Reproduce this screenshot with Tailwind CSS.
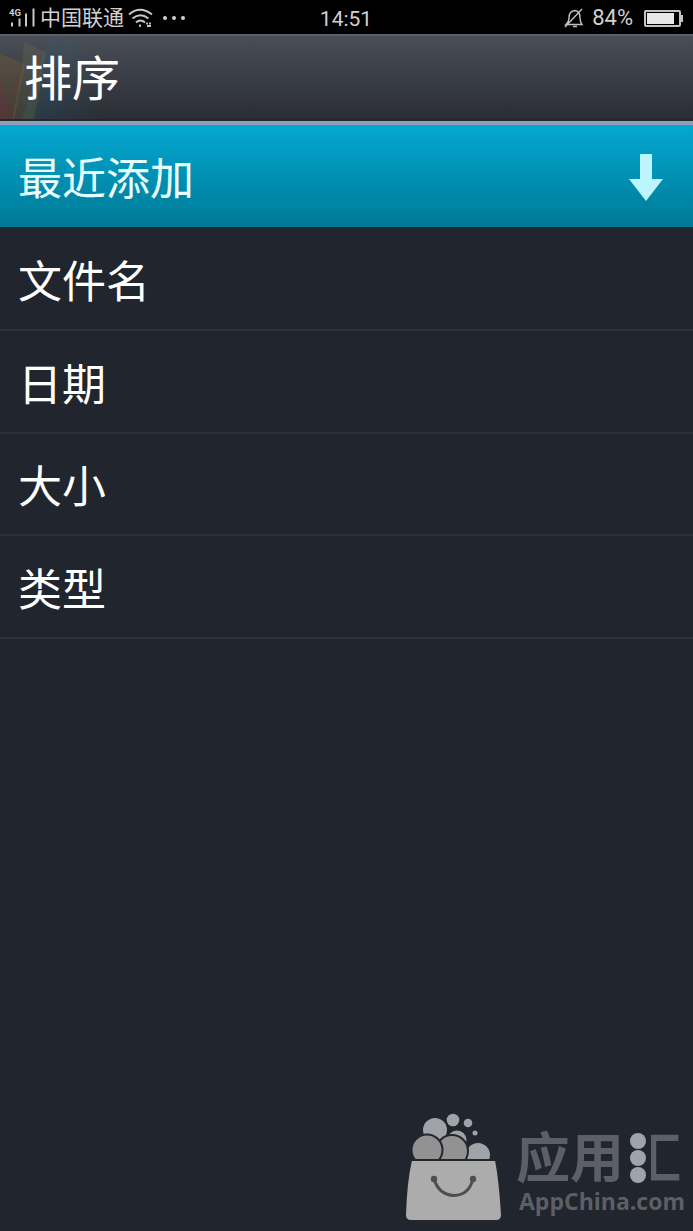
<!DOCTYPE html>
<html lang="zh-CN">
<head>
  <meta charset="UTF-8" />
  <meta name="viewport" content="width=device-width, initial-scale=1.0"/>
  <title>排序</title>
  <script src="https://cdn.jsdelivr.net/npm/@tailwindcss/browser@4"></script>
</head>
<body class="bg-[#21252d] font-['Roboto','Noto_Sans_CJK_SC',sans-serif] text-white">
<div class="relative h-[1231px] w-full overflow-hidden">

  <!-- Status bar -->
  <header class="grid h-[34px] grid-cols-3 items-center bg-black pt-[2px] pl-[9px] pr-[10px] text-[#d0d0d0]">
    <div class="flex items-center">
      <svg class="mr-[4px] h-[20px] w-[27px]" viewBox="0 0 27 20">
        <text x="0" y="8" font-size="9.500" font-weight="700" fill="#d0d0d0">4G</text>
        <path d="M3 14.500v4M10.500 10.500v8M17 5.500v13M24.500 .5v18" stroke="#c8c8c8" stroke-width="2"/>
      </svg>
      <span class="text-[21px] leading-none whitespace-nowrap">中国联通</span>
      <svg class="ml-[4px] h-[20px] w-[25px] shrink-0" viewBox="0 0 25 20" fill="none" stroke="#c8c8c8" stroke-width="2">
        <path d="M1 6.500Q12 -3 24 6.500M4.500 10.500Q12 4 20.500 10.500M8 14.500Q12.500 10.500 17 14.500"/>
        <path d="M12 16.500v2.500M19 14.500v2M22 14.500v2M19 18h4" stroke-width="1.800"/>
      </svg>
      <span class="ml-[10px] flex gap-[5px]">
        <i class="size-[4px] rounded-full bg-[#d0d0d0]"></i>
        <i class="size-[4px] rounded-full bg-[#d0d0d0]"></i>
        <i class="size-[4px] rounded-full bg-[#d0d0d0]"></i>
      </span>
    </div>
    <time class="pt-[2px] text-center text-[21px] leading-none">14:51</time>
    <div class="flex items-center justify-end">
      <svg class="mr-[8px] h-[20px] w-[20px]" viewBox="0 0 20 20" fill="none" stroke="#c0c0c0" stroke-width="1.400">
        <path d="M2 16.500Q5 14 5 10Q5 3 11 2.500Q16 3 16 10Q16 14 18 16.500ZM9 18.500h4M1 19L18 1"/>
      </svg>
      <span class="mr-[11px] text-[22px] leading-none">84%</span>
      <div class="h-[17px] w-[37px] rounded-[2px] border-2 border-[#c4c4c4] p-[1px]">
        <div class="h-full w-[27px] bg-[#e8e8e8]"></div>
      </div>
      <div class="h-[7px] w-[2px] bg-[#c4c4c4]"></div>
    </div>
  </header>

  <!-- Title bar -->
  <div class="relative flex h-[87px] items-center overflow-hidden border-t-2 border-[#5a5e67] border-b-2 border-b-[#24272d] bg-linear-to-b from-[#4a4e57] to-[#2a2d34] pt-[4px] pl-[24px]">
    <svg class="absolute top-0 left-0 h-[84px] w-[110px]" viewBox="0 0 110 84">
      <defs>
        <linearGradient id="fade" x1="0" x2="1" y1="0" y2="0">
          <stop offset="0" stop-color="#246a82" stop-opacity=".25"/>
          <stop offset="1" stop-color="#246a82" stop-opacity="0"/>
        </linearGradient>
      </defs>
      <path d="M48 4Q60 -3 76 4L106 60V84H22Z" fill="url(#fade)"/>
      <path d="M24 5L46 17L34 84H12L22 34Z" fill="#7a7548" fill-opacity=".25"/>
      <path d="M0 18L25 28L14 84H0Z" fill="#99672d" fill-opacity=".25"/>
      <path d="M0 44L14 84H0Z" fill="#7c2848" fill-opacity=".25"/>
    </svg>
    <h1 class="relative text-[48px] leading-none">排序</h1>
  </div>

  <!-- Sort options -->
  <main class="text-[44px] leading-none">
    <div class="h-[4px] bg-[#8ea0bb]"></div>
    <div class="flex h-[102px] items-center justify-between bg-linear-to-b from-[#04a8d2] to-[#007995] pr-[30px] pl-[18px] text-[#e8ffff]">
      <span class="pt-[8px]">最近添加</span>
      <svg class="mt-[2px] h-[47px] w-[34px]" viewBox="0 0 34 47">
        <path d="M11 0H23V25H34L17 47L0 25H11Z" fill="#bdf5ff"/>
      </svg>
    </div>
    <div class="flex h-[104px] items-center border-b-2 border-[#2d323a] pt-[9px] pl-[18px]">文件名</div>
    <div class="flex h-[102.500px] items-center border-b-2 border-[#2d323a] pt-[9px] pl-[18px]">日期</div>
    <div class="flex h-[102.500px] items-center border-b-2 border-[#2d323a] pt-[9px] pl-[18px]">大小</div>
    <div class="flex h-[102.500px] items-center border-b-2 border-[#2d323a] pt-[9px] pl-[18px]">类型</div>
  </main>

  <!-- Watermark -->
  <div class="absolute right-0 bottom-0 flex h-[120px] w-[290px]">
    <svg class="h-[120px] w-[102px] shrink-0" viewBox="0 0 102 120">
      <g fill="#a0a3a8">
        <circle cx="50" cy="9" r="6.300"/>
        <circle cx="65" cy="12" r="4.300"/>
        <circle cx="72" cy="22" r="2.500"/>
        <circle cx="54" cy="29" r="10.500" stroke="#22262d" stroke-width="2"/>
        <circle cx="32" cy="19" r="12"/>
        <circle cx="75" cy="44" r="13" stroke="#22262d" stroke-width="2"/>
        <circle cx="49" cy="40" r="16" fill="#929292" stroke="#22262d" stroke-width="2"/>
        <circle cx="24" cy="39" r="15.500" fill="#929292" stroke="#22262d" stroke-width="2"/>
      </g>
      <path d="M8 49H93Q97 70 99 104Q99 110 93 110H8Q2 110 2 104Q3 71 8 49Z" fill="#acacac" stroke="#22262d" stroke-width="2"/>
      <path d="M31 68Q36 84 51 84.500Q66 84 70 68" fill="none" stroke="#4d4e50" stroke-width="3"/>
      <circle cx="31" cy="68" r="3.200" fill="#4d4e50"/>
      <circle cx="70" cy="68" r="3.200" fill="#4d4e50"/>
    </svg>
    <div class="relative ml-[11px] pt-[20px]">
      <div class="flex text-[54px] leading-[57px] font-bold text-[#5c5f66]">
        <span>应用</span><span class="ml-[3px] origin-right scale-x-85 bg-linear-to-r from-transparent from-35% to-[#5c5f66] to-35% bg-clip-text text-transparent">汇</span>
      </div>
      <div class="absolute top-[22px] left-[114px] flex flex-col gap-[1px]">
        <i class="size-[16px] rounded-full bg-[#a0a3ab]"></i>
        <i class="size-[16px] rounded-full bg-[#a0a3ab]"></i>
        <i class="size-[16px] rounded-full bg-[#a0a3ab]"></i>
      </div>
      <p class="ml-[3px] font-['Open_Sans'] text-[23px] leading-[26px] font-bold text-[#5c5f66]">AppChina.com</p>
    </div>
  </div>

</div>
</body>
</html>
